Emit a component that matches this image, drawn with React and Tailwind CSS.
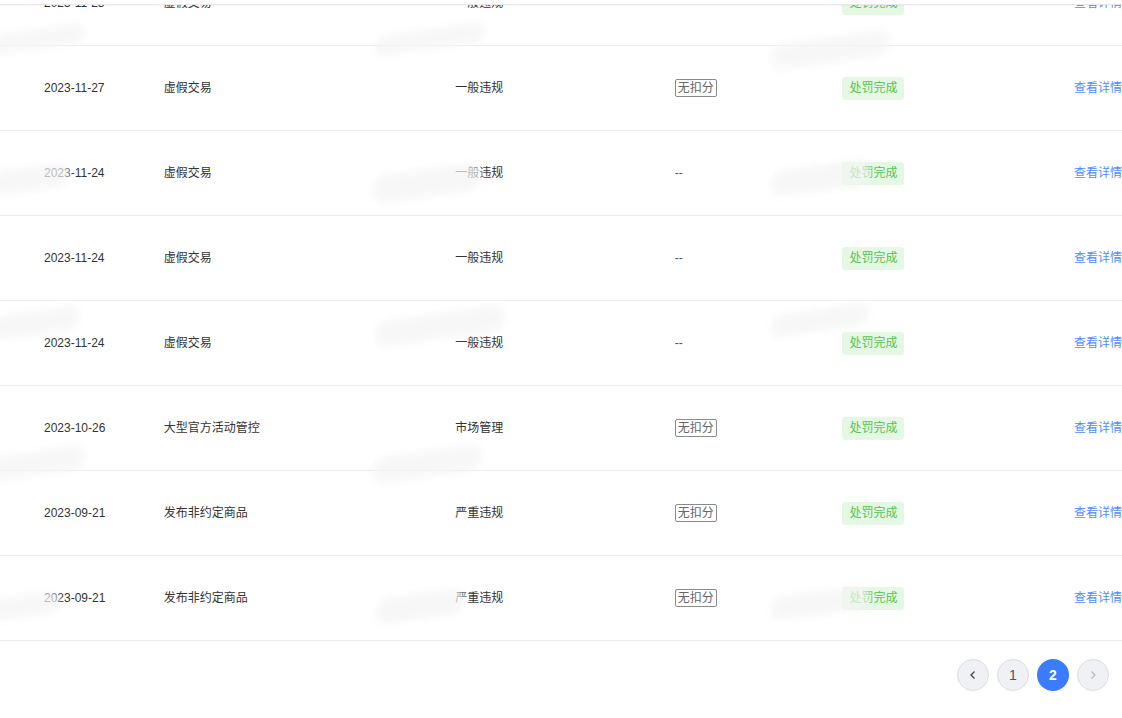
import React from 'react';

const rows = [
  { date: '2023-11-28', type: '虚假交易', level: '一般违规', score: '--' },
  { date: '2023-11-27', type: '虚假交易', level: '一般违规', score: 'none' },
  { date: '2023-11-24', type: '虚假交易', level: '一般违规', score: '--' },
  { date: '2023-11-24', type: '虚假交易', level: '一般违规', score: '--' },
  { date: '2023-11-24', type: '虚假交易', level: '一般违规', score: '--' },
  { date: '2023-10-26', type: '大型官方活动管控', level: '市场管理', score: 'none' },
  { date: '2023-09-21', type: '发布非约定商品', level: '严重违规', score: 'none' },
  { date: '2023-09-21', type: '发布非约定商品', level: '严重违规', score: 'none' },
];

// 水印残影
const smudges = [
  { top: 28, left: -10, w: 95, h: 22 },
  { top: 28, left: 375, w: 110, h: 22 },
  { top: 36, left: 770, w: 120, h: 28 },
  { top: 166, left: -10, w: 80, h: 26 },
  { top: 168, left: 372, w: 110, h: 30 },
  { top: 164, left: 770, w: 100, h: 28 },
  { top: 310, left: -10, w: 90, h: 26 },
  { top: 312, left: 375, w: 130, h: 28 },
  { top: 308, left: 770, w: 100, h: 24 },
  { top: 450, left: -10, w: 95, h: 26 },
  { top: 450, left: 372, w: 110, h: 28 },
  { top: 594, left: -10, w: 70, h: 24 },
  { top: 592, left: 375, w: 90, h: 28 },
  { top: 590, left: 770, w: 100, h: 26 },
];

const Row = ({ row }) => (
  <div className="flex h-[85px] items-center border-b border-[#ececf0] text-[12px] text-[#333]">
    <div className="w-[164px] pl-[44px]">{row.date}</div>
    <div className="w-[292px]">{row.type}</div>
    <div className="w-[220px]">{row.level}</div>
    <div className="w-[168px]">
      {row.score === 'none' ? (
        <span className="inline-flex h-[18px] items-center rounded-[2px] border border-[#8a8a8a] px-[2px] text-[#666] leading-none">
          无扣分
        </span>
      ) : (
        <span className="text-[#555]">--</span>
      )}
    </div>
    <div className="w-[232px]">
      <span className="inline-flex h-[23px] items-center rounded-[3px] bg-[#e5f8e4] px-[7px] text-[#52c452]">
        处罚完成
      </span>
    </div>
    <div className="whitespace-nowrap text-[#4f8dfb]">查看详情</div>
  </div>
);

const PageBtn = ({ children, active, dim }) => (
  <button
    className={
      active
        ? 'flex h-[32px] w-[32px] items-center justify-center rounded-full bg-[#3a7cfd] text-[14px] font-bold text-white'
        : 'flex h-[32px] w-[32px] items-center justify-center rounded-full border border-[#dcdde2] bg-[#f0f1f5] text-[14px] ' +
          (dim ? 'text-[#b0b0b8]' : 'text-[#555]')
    }
  >
    {children}
  </button>
);

export default function App() {
  return (
    <div
      className="relative h-[718px] w-[1122px] overflow-hidden bg-white"
      style={{ fontFamily: '"Liberation Sans", "Noto Sans CJK SC", sans-serif' }}
    >
      <div className="relative z-10 h-[5px] border-b border-[#e8e8ec] bg-white shadow-[0_1px_2px_rgba(0,0,0,0.04)]" />
      <div className="h-[41px] overflow-hidden">
        <div className="-mt-[44px]">
          <Row row={rows[0]} />
        </div>
      </div>
      {rows.slice(1).map((row, i) => (
        <Row key={i} row={row} />
      ))}
      <div className="flex h-[66px] items-center justify-end gap-[8px] pr-[13px] pt-[2px]">
        <PageBtn>
          <svg width="12" height="12" viewBox="0 0 12 12" fill="none" stroke="#444" strokeWidth="1.3">
            <path d="M7.5 2.5 4 6l3.5 3.5" />
          </svg>
        </PageBtn>
        <PageBtn>1</PageBtn>
        <PageBtn active>2</PageBtn>
        <PageBtn dim>
          <svg width="12" height="12" viewBox="0 0 12 12" fill="none" stroke="#b8b8c0" strokeWidth="1.3">
            <path d="M4.5 2.5 8 6 4.5 9.5" />
          </svg>
        </PageBtn>
      </div>
      {smudges.map((s, i) => (
        <div
          key={i}
          className="pointer-events-none absolute -skew-y-[8deg] rounded-full bg-[#f5f5f5] opacity-70 blur-[3px]"
          style={{ top: s.top, left: s.left, width: s.w, height: s.h }}
        />
      ))}
    </div>
  );
}
